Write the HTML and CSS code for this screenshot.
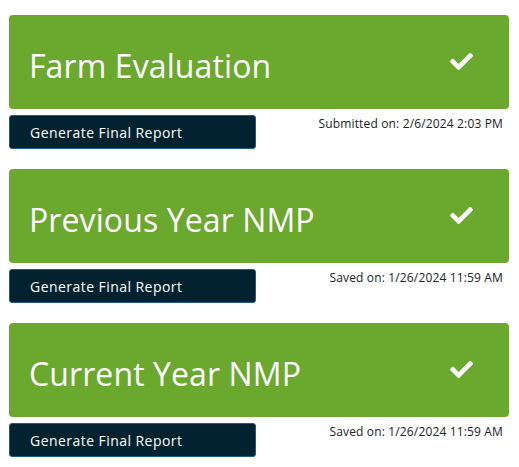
FILE: index.html
```html
<!DOCTYPE html>
<html>
<head>
<meta charset="utf-8">
<link rel="stylesheet" href="styles.css">
</head>
<body>
<div class="list">
  <section class="item">
    <div class="card">
      <h2 class="title">Farm Evaluation</h2>
      <svg class="check" viewBox="0 0 512 512" width="23" height="23"><path fill="#fff" d="M173.9 439.4l-166.4-166.4c-10-10-10-26.2 0-36.2l36.2-36.2c10-10 26.2-10 36.2 0L192 312.7 432.1 72.6c10-10 26.2-10 36.2 0l36.2 36.2c10 10 10 26.2 0 36.2l-294.4 294.4c-10 10-26.2 10-36.2 0z"/></svg>
    </div>
    <div class="footer">
      <button class="btn">Generate Final Report</button>
      <span class="stamp">Submitted on: 2/6/2024 2:03 PM</span>
    </div>
  </section>
  <section class="item">
    <div class="card">
      <h2 class="title">Previous Year NMP</h2>
      <svg class="check" viewBox="0 0 512 512" width="23" height="23"><path fill="#fff" d="M173.9 439.4l-166.4-166.4c-10-10-10-26.2 0-36.2l36.2-36.2c10-10 26.2-10 36.2 0L192 312.7 432.1 72.6c10-10 26.2-10 36.2 0l36.2 36.2c10 10 10 26.2 0 36.2l-294.4 294.4c-10 10-26.2 10-36.2 0z"/></svg>
    </div>
    <div class="footer">
      <button class="btn">Generate Final Report</button>
      <span class="stamp">Saved on: 1/26/2024 11:59 AM</span>
    </div>
  </section>
  <section class="item">
    <div class="card">
      <h2 class="title">Current Year NMP</h2>
      <svg class="check" viewBox="0 0 512 512" width="23" height="23"><path fill="#fff" d="M173.9 439.4l-166.4-166.4c-10-10-10-26.2 0-36.2l36.2-36.2c10-10 26.2-10 36.2 0L192 312.7 432.1 72.6c10-10 26.2-10 36.2 0l36.2 36.2c10 10 10 26.2 0 36.2l-294.4 294.4c-10 10-26.2 10-36.2 0z"/></svg>
    </div>
    <div class="footer">
      <button class="btn">Generate Final Report</button>
      <span class="stamp">Saved on: 1/26/2024 11:59 AM</span>
    </div>
  </section>
</div>
</body>
</html>
```
FILE: styles.css
```css
* { box-sizing: border-box; }
body {
  margin: 0;
  background: #fff;
  font-family: "Open Sans", "Noto Sans", sans-serif;
}
.list {
  display: flex;
  flex-direction: column;
  gap: 20px;
  padding: 15px 10px 0 9px;
}
.item {
  display: flex;
  flex-direction: column;
  gap: 6px;
}
.card {
  height: 94px;
  background: #6ba82e;
  border-radius: 4px;
  display: flex;
  align-items: center;
  justify-content: space-between;
  padding: 6px 36px 0 20px;
}
.title {
  margin: 0;
  color: #fff;
  font-weight: 400;
  font-size: 32px;
  letter-spacing: 0.1px;
}
.check {
  display: block;
  margin-top: -8px;
}
.footer {
  display: flex;
  justify-content: space-between;
  align-items: flex-start;
}
.btn {
  width: 247px;
  height: 34px;
  background: #02222f;
  color: #fff;
  border: 1px solid #1e5b85;
  border-radius: 3px;
  font-family: inherit;
  font-size: 14px;
  letter-spacing: 0.45px;
  text-align: left;
  padding: 0 0 0 20px;
}
.stamp {
  font-size: 12px;
  letter-spacing: 0.15px;
  color: #222;
  padding-right: 6px;
  margin-top: 0;
}
```
